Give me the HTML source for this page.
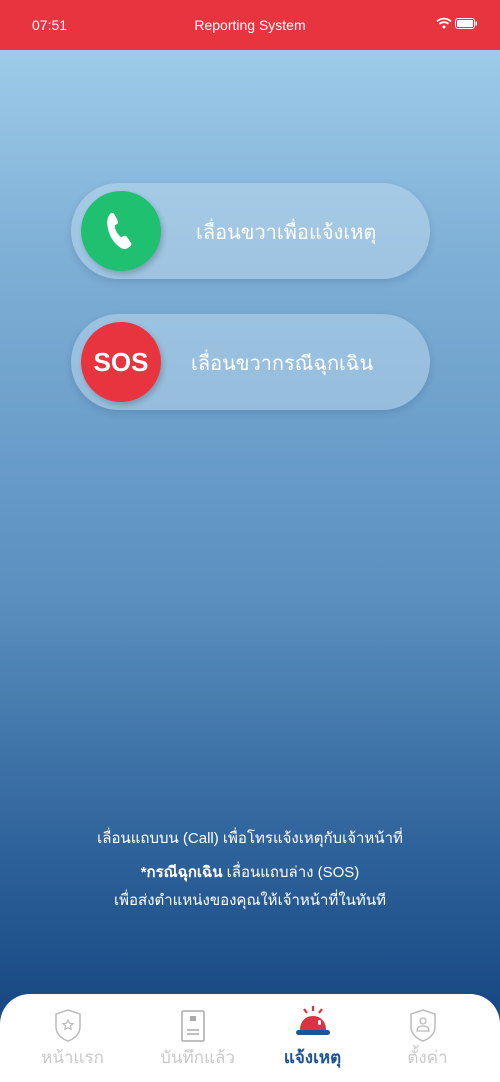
<!DOCTYPE html>
<html><head><meta charset="utf-8"><style>
*{margin:0;padding:0;box-sizing:border-box}
body{width:500px;height:1082px;overflow:hidden;font-family:"Liberation Sans","DejaVu Sans",sans-serif;position:relative;background:linear-gradient(180deg,#9dcbe9 50px,#7fb0d6 250px,#5a8fbf 600px,#2e629a 850px,#194a85 1000px)}
.hdr{position:absolute;top:0;left:0;width:500px;height:50px;background:#e8343f;color:#fff}
.hdr .t{position:absolute;left:0;right:0;top:17px;text-align:center;font-size:14px}
.hdr .tm{position:absolute;left:32px;top:17px;font-size:14px}
.pill{position:absolute;left:71px;width:359px;height:96px;border-radius:48px;background:rgba(200,225,242,0.45);box-shadow:0 3px 8px rgba(0,40,90,0.15)}
.circ{position:absolute;left:10px;top:8px;width:80px;height:80px;border-radius:50%;box-shadow:2px 3px 6px rgba(0,0,0,0.2);display:flex;align-items:center;justify-content:center}
.lbl{position:absolute;left:120px;top:33px;color:#fff;font-size:20px;font-weight:300;white-space:nowrap}
.info{position:absolute;left:0;right:0;text-align:center;color:#fff;font-size:15px}
.nav{position:absolute;left:0;top:994px;width:500px;height:88px;background:#fff;border-radius:30px 30px 0 0}
.it{position:absolute;top:0;width:125px;text-align:center}
.it span{position:absolute;left:0;right:0;top:50px;font-size:17px;color:#c9c9c9}
.it svg{position:absolute;top:14px;left:43px}
</style></head><body>
<div class="hdr"><div class="tm">07:51</div><div class="t">Reporting System</div>
<svg style="position:absolute;left:436px;top:17px" width="16" height="12" viewBox="0 0 16 12"><path d="M1 4.5a10 10 0 0 1 14 0M3.5 7a6.5 6.5 0 0 1 9 0" stroke="#fff" stroke-width="1.8" fill="none"/><circle cx="8" cy="10" r="1.5" fill="#fff"/></svg>
<svg style="position:absolute;left:455px;top:18px" width="22" height="11" viewBox="0 0 22 11"><rect x=".5" y=".5" width="19" height="10" rx="2.5" stroke="#fff" fill="none"/><rect x="2" y="2" width="16" height="7" rx="1" fill="#fff"/><rect x="20.5" y="3.5" width="1.5" height="4" fill="#fff"/></svg>
</div>
<div class="pill" style="top:183px"><div class="circ" style="background:#1fc06f">
<svg width="36" height="44" viewBox="0 0 24 30"><path d="M5 3c1-.6 2-.3 2.5.6l2.3 4.6c.4.8.1 1.7-.6 2.1l-1.6 1c.4 3.2 2.1 6.1 4.6 8l1.6-.9c.8-.4 1.7-.2 2.2.5l2.8 4.3c.5.8.3 1.8-.5 2.3l-1.6 1.1c-1.4.9-3.2.9-4.6 0C6.8 23.5 3 17 2.6 9.6 2.5 7.2 3.3 4.3 5 3z" fill="#fff"/></svg>
</div><div class="lbl" style="left:125px">เลื่อนขวาเพื่อแจ้งเหตุ</div></div>
<div class="pill" style="top:314px"><div class="circ" style="background:#e8343f;color:#fff;font-weight:bold;font-size:26px">SOS</div><div class="lbl">เลื่อนขวากรณีฉุกเฉิน</div></div>
<div class="info" style="top:826px">เลื่อนแถบบน (Call) เพื่อโทรแจ้งเหตุกับเจ้าหน้าที่</div>
<div class="info" style="top:860px"><b>*กรณีฉุกเฉิน</b> เลื่อนแถบล่าง (SOS)</div>
<div class="info" style="top:888px">เพื่อส่งตำแหน่งของคุณให้เจ้าหน้าที่ในทันที</div>
<div class="nav">
<div class="it" style="left:10px"><svg width="30" height="36" viewBox="0 0 30 36"><path d="M15 2l12 4v13c0 7-6 12-12 14C9 31 3 26 3 19V6z" fill="none" stroke="#bbb" stroke-width="1.5"/><path d="M15 12l1.5 3.2 3.4.4-2.5 2.3.7 3.4-3.1-1.7-3.1 1.7.7-3.4-2.5-2.3 3.4-.4z" fill="none" stroke="#bbb" stroke-width="1.2"/></svg><span>หน้าแรก</span></div>
<div class="it" style="left:135px"><svg width="30" height="36" viewBox="0 0 30 36"><rect x="4" y="3" width="22" height="30" rx="1.5" fill="none" stroke="#aaa" stroke-width="1.5"/><rect x="12" y="8" width="6" height="5" fill="#aaa"/><path d="M9 22h12M9 26h12" stroke="#aaa" stroke-width="1.5"/></svg><span>บันทึกแล้ว</span></div>
<div class="it" style="left:250px"><svg width="36" height="36" viewBox="0 0 36 36" style="left:45px;top:10px"><path d="M18 2v5M9 5l3 4M27 5l-3 4" stroke="#d9343f" stroke-width="2.2"/><path d="M5 26c0-9 6-14 13-14s13 5 13 14z" fill="#d9343f"/><rect x="23" y="16" width="3" height="5" rx="1.5" fill="#fff"/><rect x="1" y="26" width="34" height="5" rx="2.5" fill="#1c5496"/></svg><span style="color:#1c5496;font-weight:bold">แจ้งเหตุ</span></div>
<div class="it" style="left:365px"><svg width="30" height="36" viewBox="0 0 30 36"><path d="M15 2l12 4v13c0 7-6 12-12 14C9 31 3 26 3 19V6z" fill="none" stroke="#bbb" stroke-width="1.5"/><circle cx="15" cy="13" r="3" fill="none" stroke="#bbb" stroke-width="1.3"/><path d="M9 23c0-4 3-5 6-5s6 1 6 5z" fill="none" stroke="#bbb" stroke-width="1.3"/></svg><span>ตั้งค่า</span></div>
</div>
</body></html>
